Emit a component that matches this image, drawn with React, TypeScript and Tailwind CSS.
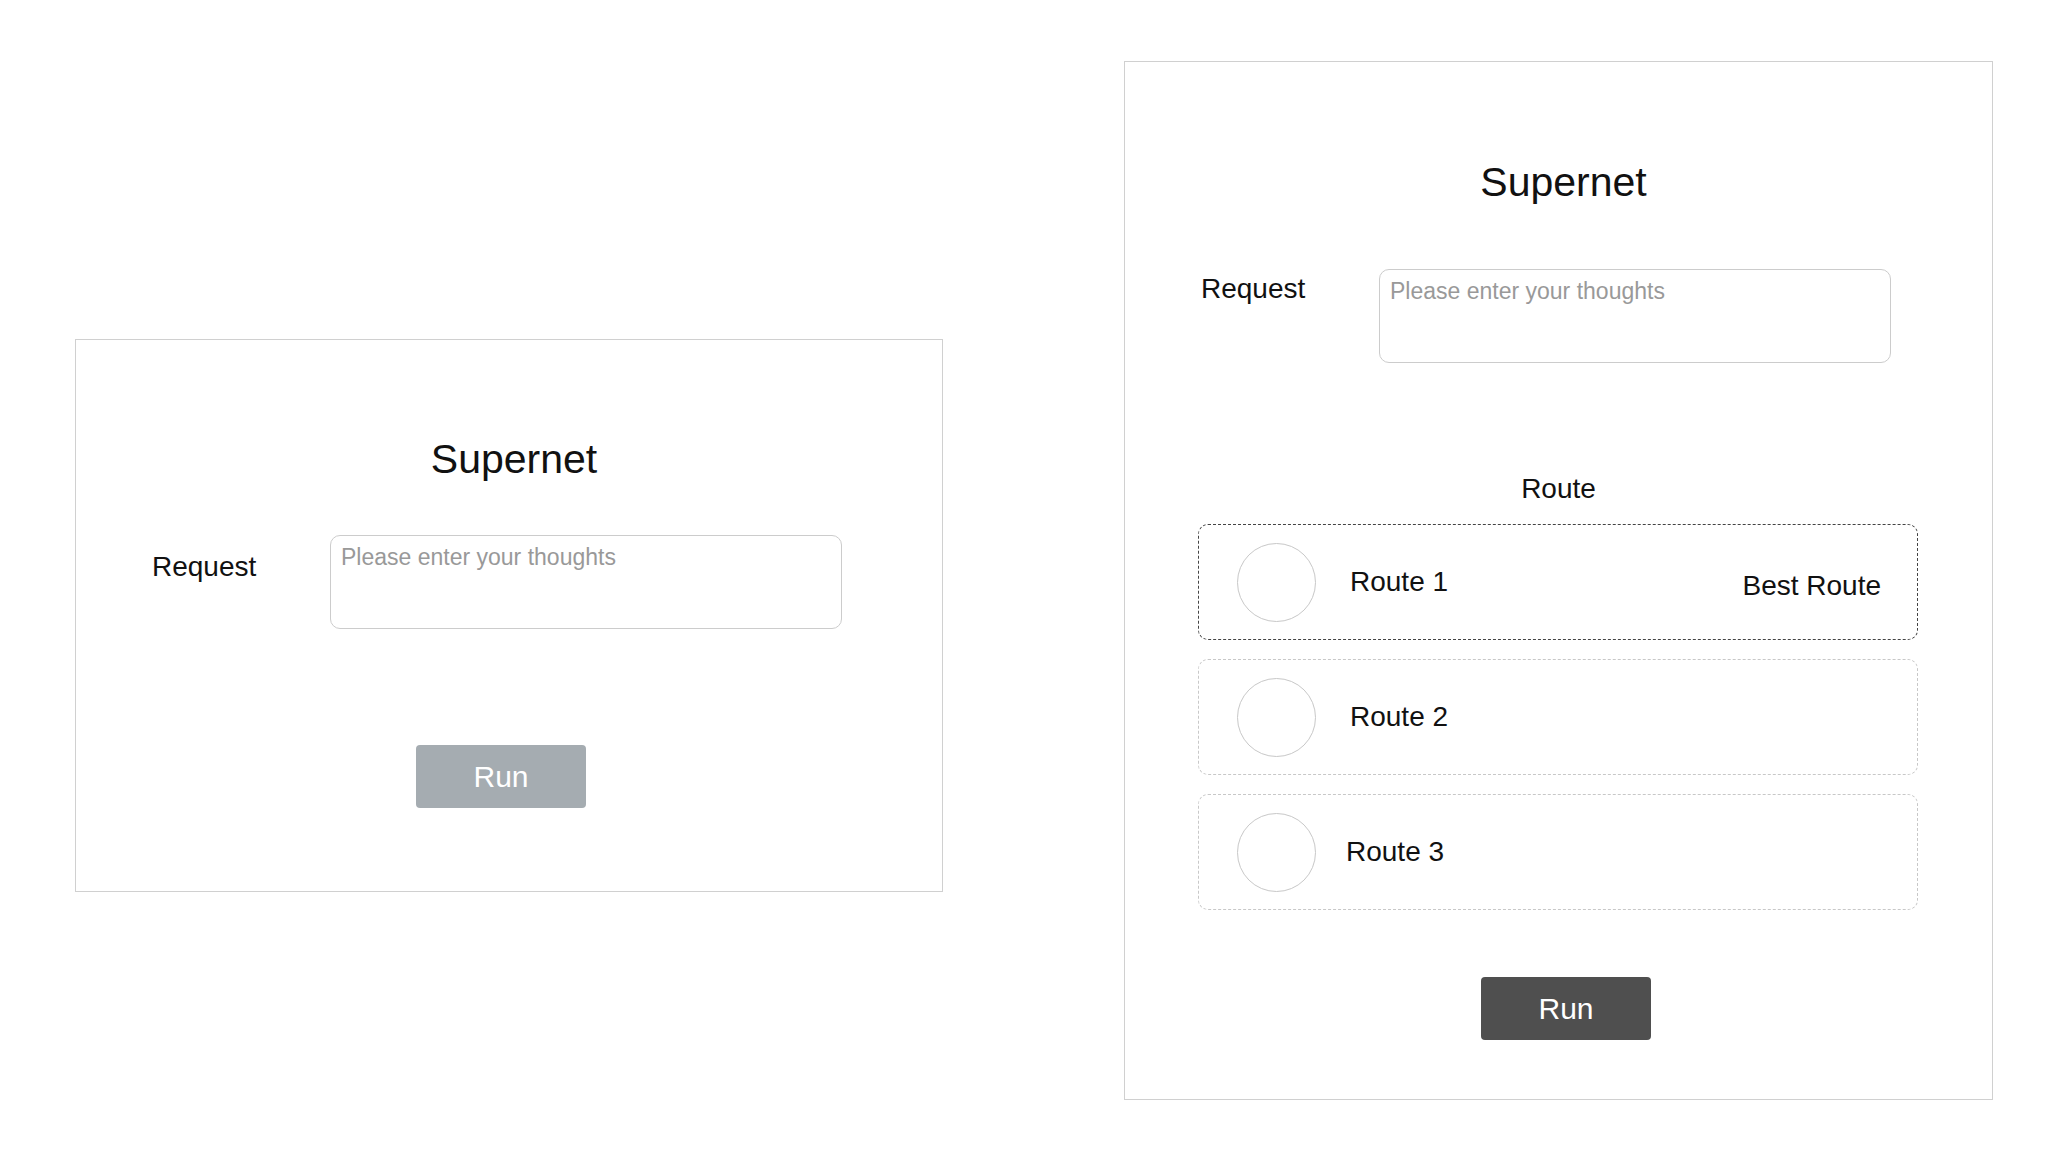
import React from "react";

const font = { fontFamily: '"Liberation Sans", Arial, sans-serif' };

function RequestRow({ labelTop }: { labelTop: string }) {
  return (
    <div className="flex items-start">
      <div className={`w-[178px] ml-[76px] text-[28px] leading-[34px] text-[#111] ${labelTop}`}>Request</div>
      <textarea
        className="w-[512px] h-[94px] resize-none rounded-[10px] border border-[#cccccc] bg-white px-[10px] pt-[7px] text-[23px] leading-[28px] text-[#333] outline-none placeholder:text-[#999999]"
        style={font}
        placeholder="Please enter your thoughts"
      />
    </div>
  );
}

function Title({ pt }: { pt: string }) {
  return (
    <div className={`${pt} pl-[10px] text-center text-[41px] leading-[48px] text-[#111]`}>Supernet</div>
  );
}

const routes = [
  { name: "Route 1", best: true, textMl: "ml-[34px]" },
  { name: "Route 2", best: false, textMl: "ml-[34px]" },
  { name: "Route 3", best: false, textMl: "ml-[30px]" },
];

export default function App() {
  return (
    <div className="w-[2048px] h-[1157px] bg-white flex items-start" style={font}>
      {/* Left panel */}
      <div className="ml-[75px] mt-[339px] w-[868px] h-[553px] border border-[#d0d0d0] flex flex-col">
        <Title pt="pt-[95px]" />
        <div className="mt-[52px]">
          <RequestRow labelTop="mt-[15px]" />
        </div>
        <button className="mt-[116px] ml-[340px] w-[170px] h-[63px] rounded-[4px] bg-[#a5acb1] text-white text-[30px] leading-[36px]">
          Run
        </button>
      </div>

      {/* Right panel */}
      <div className="ml-[181px] mt-[61px] w-[869px] h-[1039px] border border-[#d0d0d0] flex flex-col">
        <Title pt="pt-[96px]" />
        <div className="mt-[63px]">
          <RequestRow labelTop="mt-[3px]" />
        </div>
        <div className="mt-[109px] text-center text-[28px] leading-[34px] text-[#111]">Route</div>
        <div className="mt-[18px] ml-[73px] w-[720px] flex flex-col gap-[19px]">
          {routes.map((r) => (
            <div
              key={r.name}
              className={`h-[116px] rounded-[10px] border border-dashed flex items-center pr-[36px] ${
                r.best ? "border-[#444444]" : "border-[#c8c8c8]"
              }`}
            >
              <div className="ml-[38px] w-[79px] h-[79px] rounded-full border border-[#c8c8c8] shrink-0" />
              <div className={`${r.textMl} text-[28px] leading-[34px] text-[#111]`}>{r.name}</div>
              {r.best && (
                <div className="ml-auto mt-[8px] text-[28px] leading-[34px] text-[#111]">Best Route</div>
              )}
            </div>
          ))}
        </div>
        <button className="mt-[67px] ml-[356px] w-[170px] h-[63px] rounded-[4px] bg-[#4f4f4f] text-white text-[30px] leading-[36px]">
          Run
        </button>
      </div>
    </div>
  );
}
